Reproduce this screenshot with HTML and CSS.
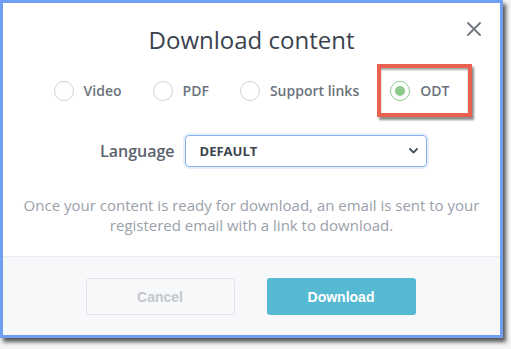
FILE: index.html
```html
<!DOCTYPE html>
<html>
<head>
<meta charset="utf-8">
<link rel="stylesheet" href="styles.css">
</head>
<body>
<div class="dialog">
  <div class="body">
    <button class="close" aria-label="Close">
      <svg width="14" height="14" viewBox="0 0 14 14"><path d="M1 1 L13 13 M13 1 L1 13" stroke="#6f7680" stroke-width="1.8" stroke-linecap="round" fill="none"/></svg>
    </button>
    <h1 class="title">Download content</h1>
    <div class="options">
      <label class="opt"><span class="radio"></span><span class="opt-label">Video</span></label>
      <label class="opt"><span class="radio"></span><span class="opt-label">PDF</span></label>
      <label class="opt"><span class="radio"></span><span class="opt-label">Support links</span></label>
      <label class="opt opt-checked"><span class="radio radio-on"><span class="dot"></span></span><span class="opt-label">ODT</span><span class="highlight"></span></label>
    </div>
    <div class="lang-row">
      <span class="lang-label">Language</span>
      <div class="select">
        <span class="select-value">DEFAULT</span>
        <svg class="chev" width="9" height="6" viewBox="0 0 9 6"><path d="M1 1 L4.5 4.5 L8 1" stroke="#4a525c" stroke-width="1.8" fill="none" stroke-linecap="round" stroke-linejoin="round"/></svg>
      </div>
    </div>
    <p class="note">Once your content is ready for download, an email is sent to your registered email with a link to download.</p>
  </div>
  <div class="footer">
    <button class="btn btn-cancel">Cancel</button>
    <button class="btn btn-primary">Download</button>
  </div>
</div>
</body>
</html>
```

FILE: styles.css
```css
* { box-sizing: border-box; }
html, body { margin: 0; padding: 0; }
body {
  background: #f5f5f5;
  width: 511px;
  height: 349px;
  overflow: hidden;
  font-family: "Open Sans", "Noto Sans", sans-serif;
}
.dialog {
  width: 503px;
  height: 338px;
  border: 3px solid #6f9ef3;
  background: #fff;
  box-shadow: 3px 4px 4px rgba(0,0,0,0.65);
  display: flex;
  flex-direction: column;
}
.body {
  position: relative;
  height: 253px;
  padding: 21px 10px 0;
  display: flex;
  flex-direction: column;
  align-items: center;
}
.close {
  position: absolute;
  top: 19px;
  right: 19px;
  width: 14px;
  height: 14px;
  padding: 0;
  border: 0;
  background: none;
  display: flex;
}
.title {
  margin: 0;
  font-size: 24px;
  line-height: 32px;
  font-weight: 400;
  color: #3b4350;
}
.options {
  margin-top: 25px;
  display: flex;
  gap: 31px;
  align-items: center;
  height: 20px;
}
.opt {
  position: relative;
  display: flex;
  align-items: center;
  gap: 10px;
}
.radio {
  width: 20px;
  height: 20px;
  border: 1px solid #cdd1d6;
  border-radius: 50%;
  display: flex;
  align-items: center;
  justify-content: center;
  background: #fff;
}
.radio-on { border-color: #8fca8f; }
.dot {
  width: 10px;
  height: 10px;
  border-radius: 50%;
  background: #8cc98b;
}
.opt-label {
  font-size: 14px;
  font-weight: 600;
  line-height: 20px;
  color: #6b727d;
}
.highlight {
  position: absolute;
  left: -13px;
  top: -17px;
  width: 95px;
  height: 53px;
  border: 4px solid #e9614e;
  box-shadow: 2px 3px 2px rgba(0,0,0,0.45), inset 0 2px 2px rgba(0,0,0,0.35);
}
.lang-row {
  align-self: stretch;
  margin-top: 34px;
  padding-left: 87px;
  display: flex;
  align-items: center;
  gap: 10px;
}
.lang-label {
  font-size: 16px;
  font-weight: 600;
  color: #5b626c;
}
.select {
  width: 242px;
  height: 32px;
  border: 1px solid #84b1f0;
  border-radius: 4px;
  box-shadow: 0 0 0 2px rgba(140,180,240,0.22);
  display: flex;
  align-items: center;
  justify-content: space-between;
  padding: 0 8px 0 14px;
}
.select-value {
  font-size: 13px;
  font-weight: 700;
  color: #3d4550;
}
.note {
  margin: 28px 0 0;
  font-size: 15px;
  line-height: 20px;
  text-align: center;
  color: #9aa1ab;
}
.footer {
  flex: 1;
  border-top: 1px solid #ebedf0;
  background: #f7f8fa;
  display: flex;
  justify-content: center;
  align-items: flex-start;
  gap: 32px;
  padding: 21px 2px 0 0;
}
.btn {
  width: 149px;
  height: 37px;
  border-radius: 3px;
  font-family: "Liberation Sans", Arial, sans-serif;
  font-size: 14px;
  font-weight: 700;
}
.btn-cancel {
  background: transparent;
  border: 1px solid #e2e4e8;
  color: #c3c7cd;
}
.btn-primary {
  background: #56b9d2;
  border: 0;
  color: #fff;
}
```
